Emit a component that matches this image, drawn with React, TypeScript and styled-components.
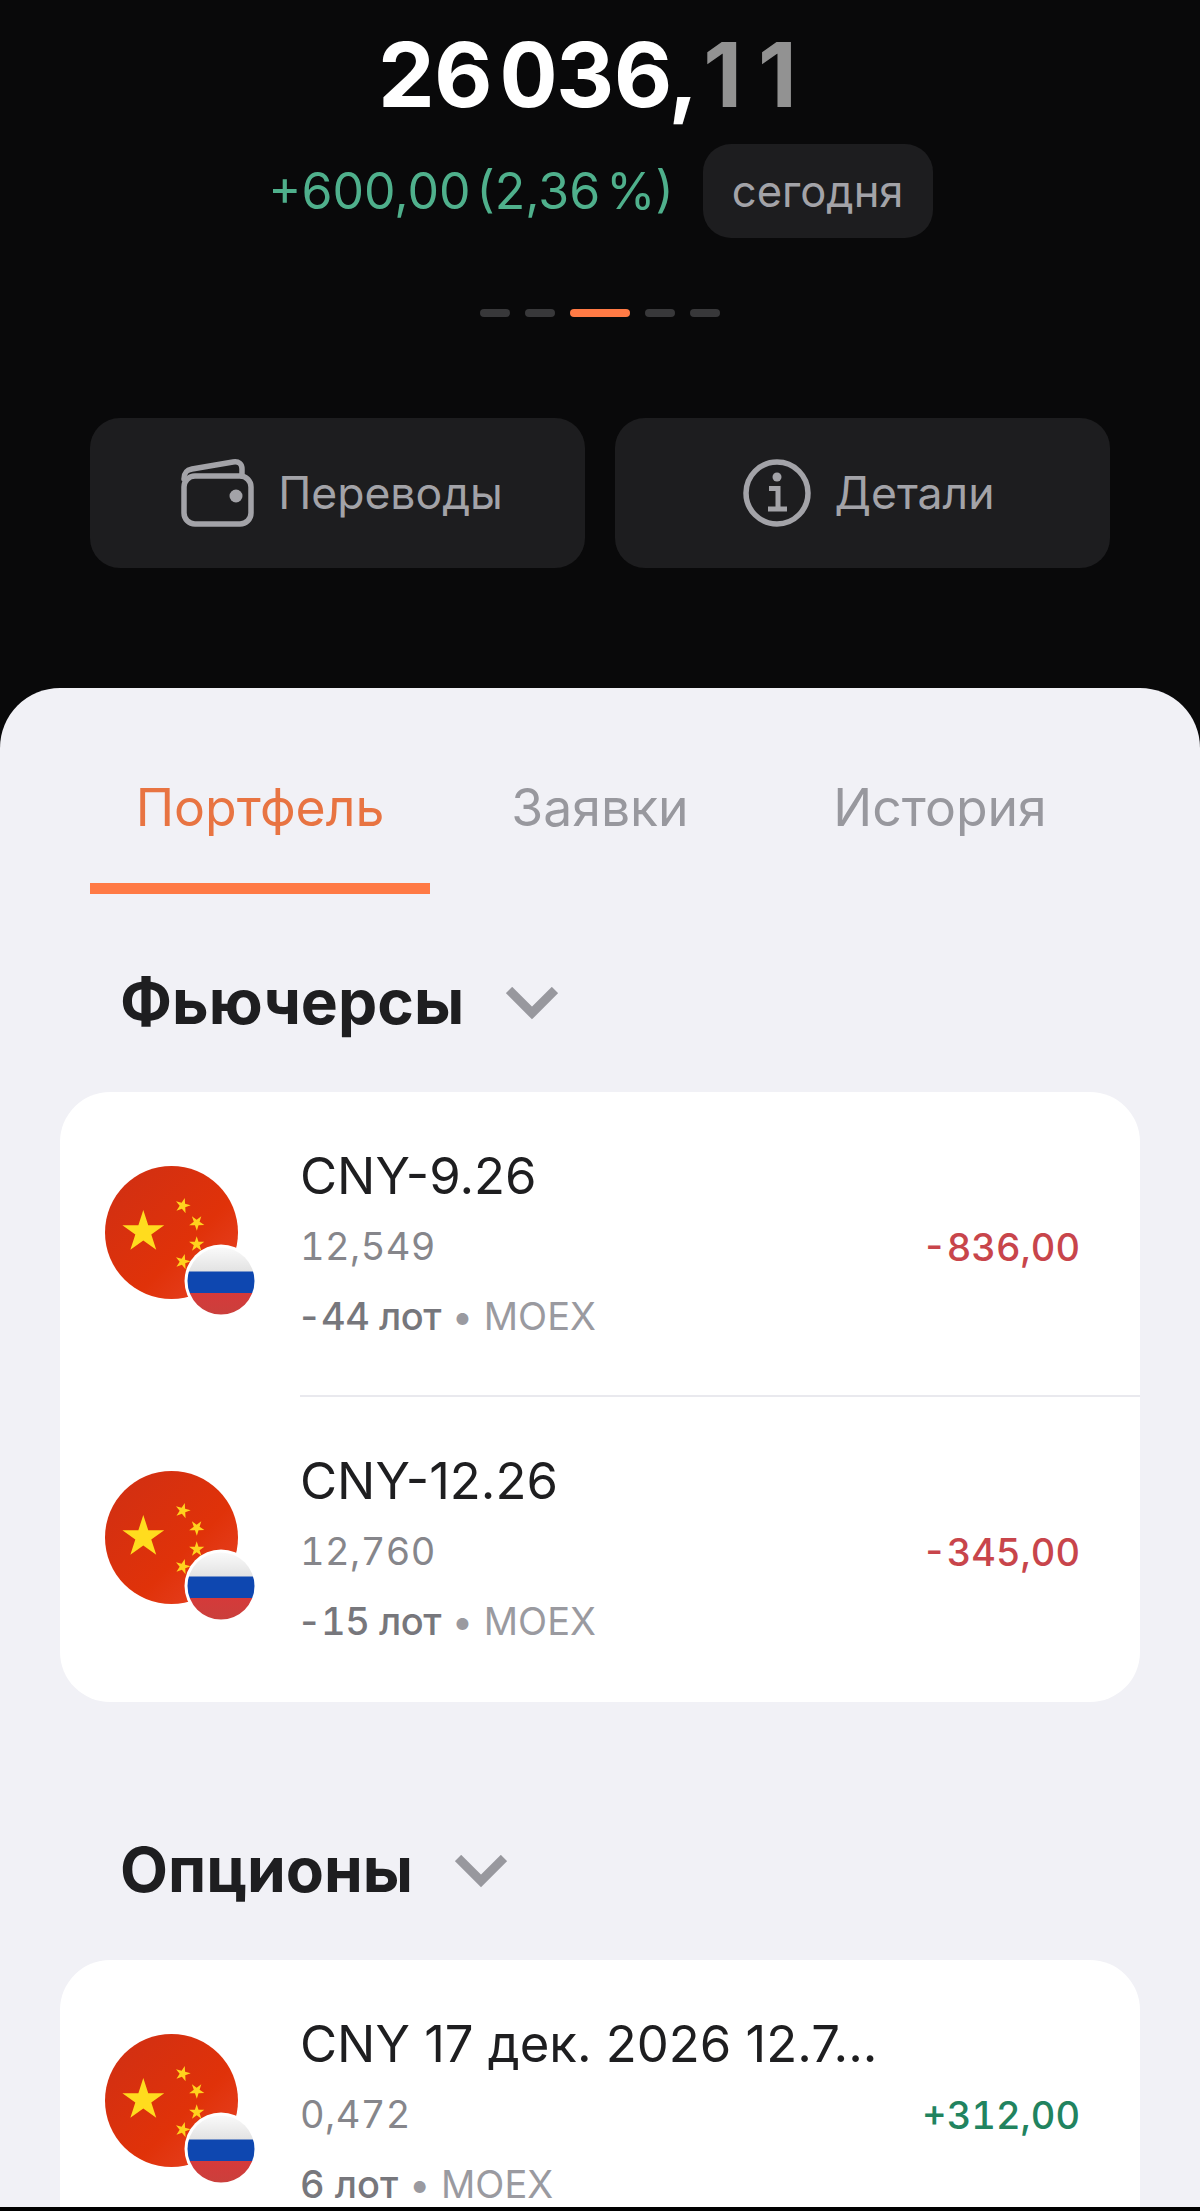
import React from "react";
import styled, { createGlobalStyle } from "styled-components";

const Global = createGlobalStyle`
  html, body { margin: 0; padding: 0; background: #000; }
  body { font-family: Inter, "Noto Sans", sans-serif; }
  * { box-sizing: border-box; }
`;

const Screen = styled.div`
  width: 1200px;
  height: 2207px;
  overflow: hidden;
  background: #09090a;
`;

const Header = styled.header`
  height: 688px;
  padding-top: 25px;
  display: flex;
  flex-direction: column;
  align-items: center;
`;

const Balance = styled.div`
  height: 100px;
  margin-right: 26px;
  font-size: 90px;
  line-height: 100px;
  font-weight: 700;
  font-variant-numeric: tabular-nums;
  letter-spacing: -1px;
  color: #fff;
  white-space: nowrap;
`;

const Thousands = styled.span`
  margin-left: 8px;
`;

const Cents = styled.span`
  color: #929292;
  font-variant-numeric: normal;
  letter-spacing: 16px;
  margin-left: 9px;
  margin-right: -16px;
`;

const ChangeRow = styled.div`
  margin-top: 19px;
  margin-left: 1px;
  height: 94px;
  display: flex;
  align-items: center;
  gap: 29px;
`;

const Change = styled.span`
  font-size: 50px;
  font-weight: 400;
  word-spacing: -8px;
  color: #4fb08c;
  white-space: nowrap;
`;

const Pill = styled.span`
  width: 230px;
  height: 94px;
  border-radius: 28px;
  background: #1d1d1f;
  color: #a3a3a8;
  font-size: 43.5px;
  display: flex;
  align-items: center;
  justify-content: center;
`;

const Pager = styled.div`
  margin-top: 71px;
  display: flex;
  gap: 15px;
`;

const Dot = styled.span<{ $active?: boolean }>`
  width: ${(p) => (p.$active ? 60 : 30)}px;
  height: 8px;
  border-radius: 4px;
  background: ${(p) => (p.$active ? "#ff7a45" : "#38383a")};
`;

const Actions = styled.div`
  margin-top: 101px;
  width: 1020px;
  display: grid;
  grid-template-columns: 495px 495px;
  gap: 30px;
`;

const ActionButton = styled.div<{ $shift: number; $gap: number }>`
  height: 150px;
  border-radius: 30px;
  background: #1d1d1f;
  color: #a3a3a8;
  font-size: 44.5px;
  padding-left: ${(p) => p.$shift}px;
  display: flex;
  align-items: center;
  justify-content: center;
  gap: ${(p) => p.$gap}px;
`;

const Panel = styled.main`
  height: 1530px;
  background: #f1f1f6;
  border-radius: 60px 60px 0 0;
  padding: 0 60px;
`;

const Tabs = styled.nav`
  margin: 0 30px;
  display: grid;
  grid-template-columns: repeat(3, 1fr);
  height: 206px;
`;

const Tab = styled.div<{ $active?: boolean }>`
  height: 206px;
  padding-top: 89px;
  text-align: center;
  font-size: 51.7px;
  line-height: 60px;
  color: ${(p) => (p.$active ? "#e87442" : "#98989e")};
  border-bottom: 11px solid ${(p) => (p.$active ? "#ff7a45" : "transparent")};
`;

const SectionHead = styled.div`
  height: 198px;
  padding: 72px 0 0 60px;
  display: flex;
  align-items: flex-start;
  gap: 42px;
`;

const SectionTitle = styled.h2`
  margin: 0;
  font-size: 62.3px;
  line-height: 72px;
  font-weight: 700;
  color: #1e1e20;
`;

const Chevron = styled.svg`
  width: 52px;
  height: 33px;
  margin-top: 21px;
  flex: none;
`;

const Card = styled.section`
  background: #fff;
  border-radius: 50px;
  margin-bottom: 60px;
  overflow: hidden;
`;

const Row = styled.div`
  position: relative;
  height: 305px;
  display: grid;
  grid-template-columns: 195px 1fr auto;
  padding: 0 60px 0 45px;
`;

const RowDivider = styled.div`
  position: absolute;
  left: 240px;
  right: 0;
  bottom: 0;
  height: 2px;
  background: #e9e9ee;
`;

const Flag = styled.svg`
  width: 150px;
  height: 150px;
  margin-top: 74px;
`;

const Info = styled.div`
  padding-top: 49px;
  min-width: 0;
`;

const Name = styled.div`
  font-size: 50.8px;
  line-height: 70px;
  color: #1e1e20;
  white-space: nowrap;
`;

const Price = styled.div`
  font-size: 38px;
  line-height: 70px;
  letter-spacing: 0.4px;
  font-variant-numeric: tabular-nums;
  color: #86868b;
`;

const Meta = styled.div`
  font-size: 38px;
  line-height: 70px;
  color: #9a9aa0;
  white-space: nowrap;
`;

const Lots = styled.span<{ $negative: boolean }>`
  font-weight: 550;
  font-variant-numeric: tabular-nums;
  letter-spacing: ${(p) => (p.$negative ? -0.5 : 0)}px;
  margin-left: ${(p) => (p.$negative ? -3 : 0)}px;
  color: #77777c;
`;

const Value = styled.div<{ $up?: boolean }>`
  margin-top: 120px;
  font-size: 38px;
  line-height: 70px;
  font-weight: 500;
  font-variant-numeric: tabular-nums;
  color: ${(p) => (p.$up ? "#21835f" : "#c8454b")};
`;

const star = (cx: number, cy: number, r: number, rot = 0) => {
  const pts: string[] = [];
  for (let i = 0; i < 10; i++) {
    const rad = i % 2 === 0 ? r : r * 0.382;
    const a = ((-90 + rot + i * 36) * Math.PI) / 180;
    pts.push(`${(cx + rad * Math.cos(a)).toFixed(2)},${(cy + rad * Math.sin(a)).toFixed(2)}`);
  }
  return pts.join(" ");
};

const FlagIcon = () => (
  <Flag viewBox="0 0 150 150">
    <defs>
      <linearGradient id="cn" x1="0" y1="0" x2="1" y2="1">
        <stop offset="0" stopColor="#cf2f14" />
        <stop offset="0.6" stopColor="#e03209" />
        <stop offset="1" stopColor="#e8452a" />
      </linearGradient>
      <linearGradient id="ruw" x1="0" y1="0" x2="0" y2="1">
        <stop offset="0" stopColor="#fbfbfb" />
        <stop offset="1" stopColor="#e2e2e2" />
      </linearGradient>
      <linearGradient id="rur" x1="0" y1="0" x2="0" y2="1">
        <stop offset="0" stopColor="#d53a3a" />
        <stop offset="1" stopColor="#c9403c" />
      </linearGradient>
      <clipPath id="ruc">
        <circle cx="116" cy="115" r="33.5" />
      </clipPath>
    </defs>
    <circle cx="66.5" cy="66.5" r="66.5" fill="url(#cn)" />
    <polygon points={star(38.3, 66, 22)} fill="#ffdc1e" />
    <polygon points={star(77.7, 39.7, 8, 15)} fill="#ffd21e" />
    <polygon points={star(91.7, 56.7, 8, 35)} fill="#ffd21e" />
    <polygon points={star(91.7, 78.3, 8, 0)} fill="#ffd21e" />
    <polygon points={star(77.7, 95.7, 8, 15)} fill="#ffd21e" />
    <circle cx="116" cy="115" r="36.5" fill="#fff" />
    <g clipPath="url(#ruc)">
      <rect x="80" y="80" width="72" height="26" fill="url(#ruw)" />
      <rect x="80" y="105.5" width="72" height="21.5" fill="#0e47b0" />
      <rect x="80" y="127" width="72" height="24" fill="url(#rur)" />
    </g>
  </Flag>
);

const WalletIcon = () => (
  <svg width="73" height="68" viewBox="0 0 73 68" fill="none" stroke="#a3a3a8" strokeWidth="5.5" strokeLinejoin="round" strokeLinecap="round">
    <path d="M3 20 C3 13 6 11 11 10 L52 3 C58 2 61 5 61 10 V17" />
    <rect x="3" y="17" width="67" height="48" rx="11" />
    <circle cx="55" cy="37" r="6.5" fill="#a3a3a8" stroke="none" />
  </svg>
);

const InfoIcon = () => (
  <svg width="68" height="68" viewBox="0 0 68 68" fill="none" stroke="#a3a3a8" strokeWidth="5.5">
    <circle cx="34" cy="34" r="31" />
    <circle cx="34" cy="18" r="4.5" fill="#a3a3a8" stroke="none" />
    <path d="M26 29.5 H35 V50 M25 50 H44" strokeWidth="5" />
  </svg>
);

const ChevronIcon = () => (
  <Chevron viewBox="0 0 52 33" fill="none" stroke="#98989e" strokeWidth="9">
    <path d="M3 3 L26 26 L49 3" />
  </Chevron>
);

type Position = { name: string; price: string; lots: string; value: string; up?: boolean };

const PositionRow = ({ p, divider }: { p: Position; divider?: boolean }) => (
  <Row>
    <FlagIcon />
    <Info>
      <Name>{p.name}</Name>
      <Price>{p.price}</Price>
      <Meta>
        <Lots $negative={p.lots.startsWith("-")}>{p.lots}</Lots> • MOEX
      </Meta>
    </Info>
    <Value $up={p.up}>{p.value}</Value>
    {divider && <RowDivider />}
  </Row>
);

export default function App() {
  return (
    <Screen>
      <Global />
      <Header>
        <Balance>
          26<Thousands>036</Thousands>,<Cents>11</Cents>
        </Balance>
        <ChangeRow>
          <Change>+600,00 (2,36 %)</Change>
          <Pill>сегодня</Pill>
        </ChangeRow>
        <Pager>
          <Dot />
          <Dot />
          <Dot $active />
          <Dot />
          <Dot />
        </Pager>
        <Actions>
          <ActionButton $shift={9} $gap={24}>
            <WalletIcon />
            Переводы
          </ActionButton>
          <ActionButton $shift={13} $gap={23}>
            <InfoIcon />
            Детали
          </ActionButton>
        </Actions>
      </Header>
      <Panel>
        <Tabs>
          <Tab $active>Портфель</Tab>
          <Tab>Заявки</Tab>
          <Tab>История</Tab>
        </Tabs>
        <SectionHead>
          <SectionTitle>Фьючерсы</SectionTitle>
          <ChevronIcon />
        </SectionHead>
        <Card>
          <PositionRow divider p={{ name: "CNY-9.26", price: "12,549", lots: "-44 лот", value: "-836,00" }} />
          <PositionRow p={{ name: "CNY-12.26", price: "12,760", lots: "-15 лот", value: "-345,00" }} />
        </Card>
        <SectionHead>
          <SectionTitle>Опционы</SectionTitle>
          <ChevronIcon />
        </SectionHead>
        <Card>
          <PositionRow p={{ name: "CNY 17 дек. 2026 12.7...", price: "0,472", lots: "6 лот", value: "+312,00", up: true }} />
        </Card>
      </Panel>
    </Screen>
  );
}
